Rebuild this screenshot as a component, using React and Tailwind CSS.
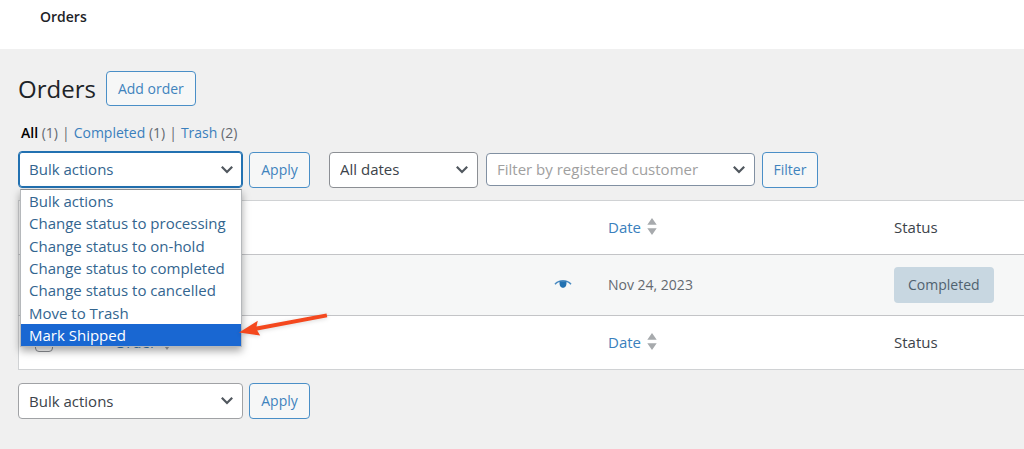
import { useState } from "react";

const bulkActions = [
  "Bulk actions",
  "Change status to processing",
  "Change status to on-hold",
  "Change status to completed",
  "Change status to cancelled",
  "Move to Trash",
  "Mark Shipped",
];

function Chevron() {
  return (
    <svg
      className="pointer-events-none absolute top-1/2 right-2 -mt-2 size-4"
      viewBox="0 0 16 16"
      fill="none"
      stroke="#50575e"
      strokeWidth="2.2"
      aria-hidden="true"
    >
      <path d="M2.8 4.8 8 10l5.2-5.2" />
    </svg>
  );
}

function Select({ label, options, wrapperClass, selectClass }) {
  return (
    <div className={`relative ${wrapperClass}`}>
      <select
        aria-label={label}
        className={`w-full appearance-none rounded border bg-white pl-2.5 pr-7 text-[15px] outline-none ${selectClass}`}
      >
        {options.map((option) => (
          <option key={option}>{option}</option>
        ))}
      </select>
      <Chevron />
    </div>
  );
}

function Button({ children, className }) {
  return (
    <button
      type="button"
      className={`shrink-0 rounded border border-[#4a8fc7] bg-[#f6f7f7] text-sm text-[#3f83bd] ${className}`}
    >
      {children}
    </button>
  );
}

function BulkMenu() {
  const [active, setActive] = useState("Mark Shipped");
  return (
    <ul
      role="listbox"
      aria-label="Bulk actions"
      className="absolute top-full right-px left-0.5 z-10 mt-px flex h-[158px] flex-col border border-[#b5b8bb] border-t-[#8a8d90] bg-white text-[15px] text-[#33658f] shadow-[0_4px_8px_rgba(0,0,0,0.35)]"
    >
      {bulkActions.map((action) => (
        <li
          key={action}
          role="option"
          aria-selected={action === active}
          onMouseEnter={() => setActive(action)}
          className={`flex flex-1 items-center whitespace-nowrap pl-2 leading-5 ${
            action === active ? "bg-[#1967d2] text-white" : ""
          }`}
        >
          {action}
        </li>
      ))}
    </ul>
  );
}

function Sortable({ children }) {
  return (
    <a href="#sort" className="inline-flex items-center gap-1.5 text-[#3a7fbd]">
      {children}
      <svg className="-mt-0.5 h-[17px] w-2.5" viewBox="0 0 10 17" fill="#a7aaad" aria-hidden="true">
        <path d="M5 0 9.7 6.800H.3zM5 17 .3 10.200h9.400z" />
      </svg>
    </a>
  );
}

function HeadingRow() {
  return (
    <tr className="h-[54px]">
      <td className="pl-4">
        <input
          type="checkbox"
          aria-label="Select all"
          className="block size-[18px] appearance-none rounded border border-[#8c8f94] bg-white"
        />
      </td>
      <th scope="col" className="px-2.5 text-left font-normal">
        <Sortable>Order</Sortable>
      </th>
      <th scope="col" className="px-2.5 text-left font-normal">
        <Sortable>Date</Sortable>
      </th>
      <th scope="col" className="px-2.5 text-left font-normal">
        Status
      </th>
    </tr>
  );
}

function Eye() {
  return (
    <svg className="h-3 w-[18px]" viewBox="0 0 18 12" aria-hidden="true">
      <path
        d="M1 5.2C3.2 2.8 6 1.8 9 1.8s5.8 1 8 3.4"
        fill="none"
        stroke="#4a8bc2"
        strokeWidth="1.5"
      />
      <path d="M5.600 2.200h6.800c.5 3.700-.8 6.600-3.400 6.600S5.100 5.900 5.600 2.200z" fill="#2271b1" />
    </svg>
  );
}

function Arrow() {
  return (
    <svg
      className="pointer-events-none absolute top-[124px] left-full z-20 -ml-1 h-7 w-[90px] drop-shadow-sm"
      viewBox="0 0 90 28"
      aria-hidden="true"
    >
      <path d="M0 20.500 18.800 8.800 17.500 14.500 87.500 1.500l.8 3.800L18.200 18.500 21.200 23.500z" fill="#f4481e" />
    </svg>
  );
}

export default function App() {
  return (
    <div className="min-h-screen overflow-x-hidden bg-[#f0f0f0] font-['Open_Sans','Noto_Sans',sans-serif] text-[#3c434a]">
      <header className="h-[49px] bg-white pt-1.5 pl-10 text-sm font-semibold leading-[22px] text-[#1d2327]">
        Orders
      </header>
      <main className="pt-[22px] pb-8 pl-[18px]">
        <div className="flex items-center gap-2.5">
          <h1 className="text-2xl leading-8 text-[#1d2327]">Orders</h1>
          <Button className="h-[35px] px-[11px]">Add order</Button>
        </div>

        <nav className="mt-4 flex gap-1 pl-[3px] text-sm leading-[22px] text-[#646970]">
          <span>
            <a href="#all" className="font-semibold text-black">All</a> (1)
          </span>
          <span>|</span>
          <span>
            <a href="#completed" className="text-[#3a7fbd]">Completed</a> (1)
          </span>
          <span>|</span>
          <span>
            <a href="#trash" className="text-[#3a7fbd]">Trash</a> (2)
          </span>
        </nav>

        <div className="mt-[7px] flex items-center">
          <div className="relative">
            <Select
              label="Bulk actions"
              options={bulkActions}
              wrapperClass="w-[225px]"
              selectClass="h-[37px] border-[#2271b1] text-[#33658f] ring-1 ring-inset ring-[#2271b1]"
            />
            <BulkMenu />
            <div className="absolute top-[37px] right-0">
              <Arrow />
            </div>
          </div>
          <Button className="ml-1.5 h-9 w-[61px]">Apply</Button>
          <Select
            label="Filter by date"
            options={["All dates"]}
            wrapperClass="ml-[19px] w-[149px]"
            selectClass="h-9 border-[#8c8f94]"
          />
          <Select
            label="Filter by registered customer"
            options={["Filter by registered customer"]}
            wrapperClass="ml-2 w-[269px]"
            selectClass="h-[33px] border-[#8190a2] text-[#a0a0a0]"
          />
          <Button className="ml-[7px] h-9 w-14">Filter</Button>
        </div>

        <table className="mt-3 w-full table-fixed border-collapse border border-r-0 border-[#d0d2d4] bg-white text-[15px]">
          <colgroup>
            <col className="w-[86px]" />
            <col />
            <col className="w-[286px]" />
            <col className="w-[140px]" />
          </colgroup>
          <thead>
            <HeadingRow />
          </thead>
          <tbody className="border-y border-[#c3c4c7] bg-[#f6f7f7]">
            <tr className="h-[61px] text-sm text-[#646970]">
              <td className="pl-4">
                <input
                  type="checkbox"
                  aria-label="Select order"
                  className="block size-[18px] appearance-none rounded border border-[#8c8f94] bg-white"
                />
              </td>
              <td>
                <a href="#preview" aria-label="Preview" className="mr-[26px] flex justify-end">
                  <Eye />
                </a>
              </td>
              <td className="px-2.5">Nov 24, 2023</td>
              <td className="pl-2.5">
                <mark className="inline-flex h-9 items-center rounded bg-[#c8d7e1] px-3.5 text-[#50626f]">
                  Completed
                </mark>
              </td>
            </tr>
          </tbody>
          <tfoot>
            <HeadingRow />
          </tfoot>
        </table>

        <div className="mt-[13px] flex items-center">
          <Select
            label="Bulk actions for selected orders"
            options={bulkActions}
            wrapperClass="w-[225px]"
            selectClass="h-9 border-[#a0a2a5]"
          />
          <Button className="ml-1.5 h-9 w-[61px]">Apply</Button>
        </div>
      </main>
    </div>
  );
}
